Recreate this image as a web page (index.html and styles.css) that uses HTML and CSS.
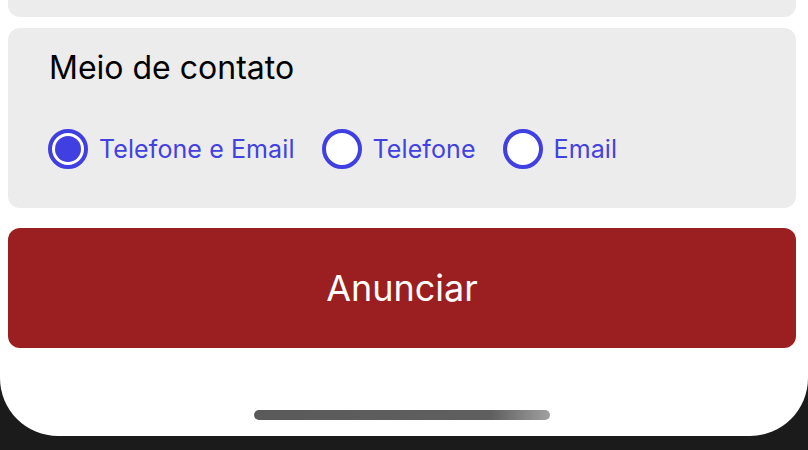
FILE: index.html
```html
<!DOCTYPE html>
<html lang="pt">
<head>
<meta charset="utf-8">
<link rel="stylesheet" href="styles.css">
</head>
<body>
<div class="screen">
  <div class="card card-top"></div>
  <div class="card contact">
    <h2 class="title">Meio de contato</h2>
    <div class="options">
      <label class="option"><span class="radio checked"><span class="dot"></span></span><span class="label">Telefone e Email</span></label>
      <label class="option"><span class="radio"></span><span class="label">Telefone</span></label>
      <label class="option"><span class="radio"></span><span class="label">Email</span></label>
    </div>
  </div>
  <button class="submit">Anunciar</button>
  <div class="home-wrap"><div class="home"></div></div>
</div>
</body>
</html>
```
FILE: styles.css
```css
html, body {
  margin: 0;
  padding: 0;
  background: #1b1b1b;
  width: 808px;
  height: 450px;
  overflow: hidden;
}
.screen {
  box-sizing: border-box;
  width: 808px;
  height: 436px;
  background: #ffffff;
  border-radius: 0 0 58px 58px;
  padding: 0 12px 0 8px;
  display: flex;
  flex-direction: column;
  font-family: Inter, "Noto Sans", sans-serif;
}
.card {
  background: #ececec;
  border-radius: 12px;
}
.card-top {
  height: 17px;
  border-radius: 0 0 12px 12px;
}
.contact {
  margin-top: 11px;
  height: 180px;
  box-sizing: border-box;
  padding: 20px 0 0 40px;
}
.title {
  margin: 0 0 0 1px;
  font-weight: 400;
  font-size: 32px;
  line-height: 40px;
  color: #000;
}
.options {
  display: flex;
  gap: 27px;
  margin-top: 41px;
}
.option {
  display: flex;
  align-items: center;
  gap: 11px;
}
.radio {
  box-sizing: border-box;
  width: 40px;
  height: 40px;
  border: 4px solid #3f3fe2;
  border-radius: 50%;
  background: #fff;
  display: flex;
  align-items: center;
  justify-content: center;
}
.dot {
  width: 26px;
  height: 26px;
  border-radius: 50%;
  background: #3f3fe2;
}
.label {
  font-size: 25px;
  letter-spacing: 0.1px;
  color: #4242e0;
}
.submit {
  margin-top: 20px;
  height: 120px;
  border: none;
  border-radius: 12px;
  background: #9b1f20;
  color: #fff;
  font-family: Inter, "Noto Sans", sans-serif;
  font-size: 36px;
  padding: 0;
}
.home-wrap {
  flex: 1;
  display: flex;
  justify-content: center;
  align-items: flex-end;
  padding-bottom: 16px;
  margin-left: -8px;
  margin-right: -8px;
}
.home {
  width: 296px;
  height: 10px;
  border-radius: 5px;
  background: linear-gradient(to right, #5a5a5a 0%, #5f5f5f 80%, #a0a0a0 100%);
}
```
